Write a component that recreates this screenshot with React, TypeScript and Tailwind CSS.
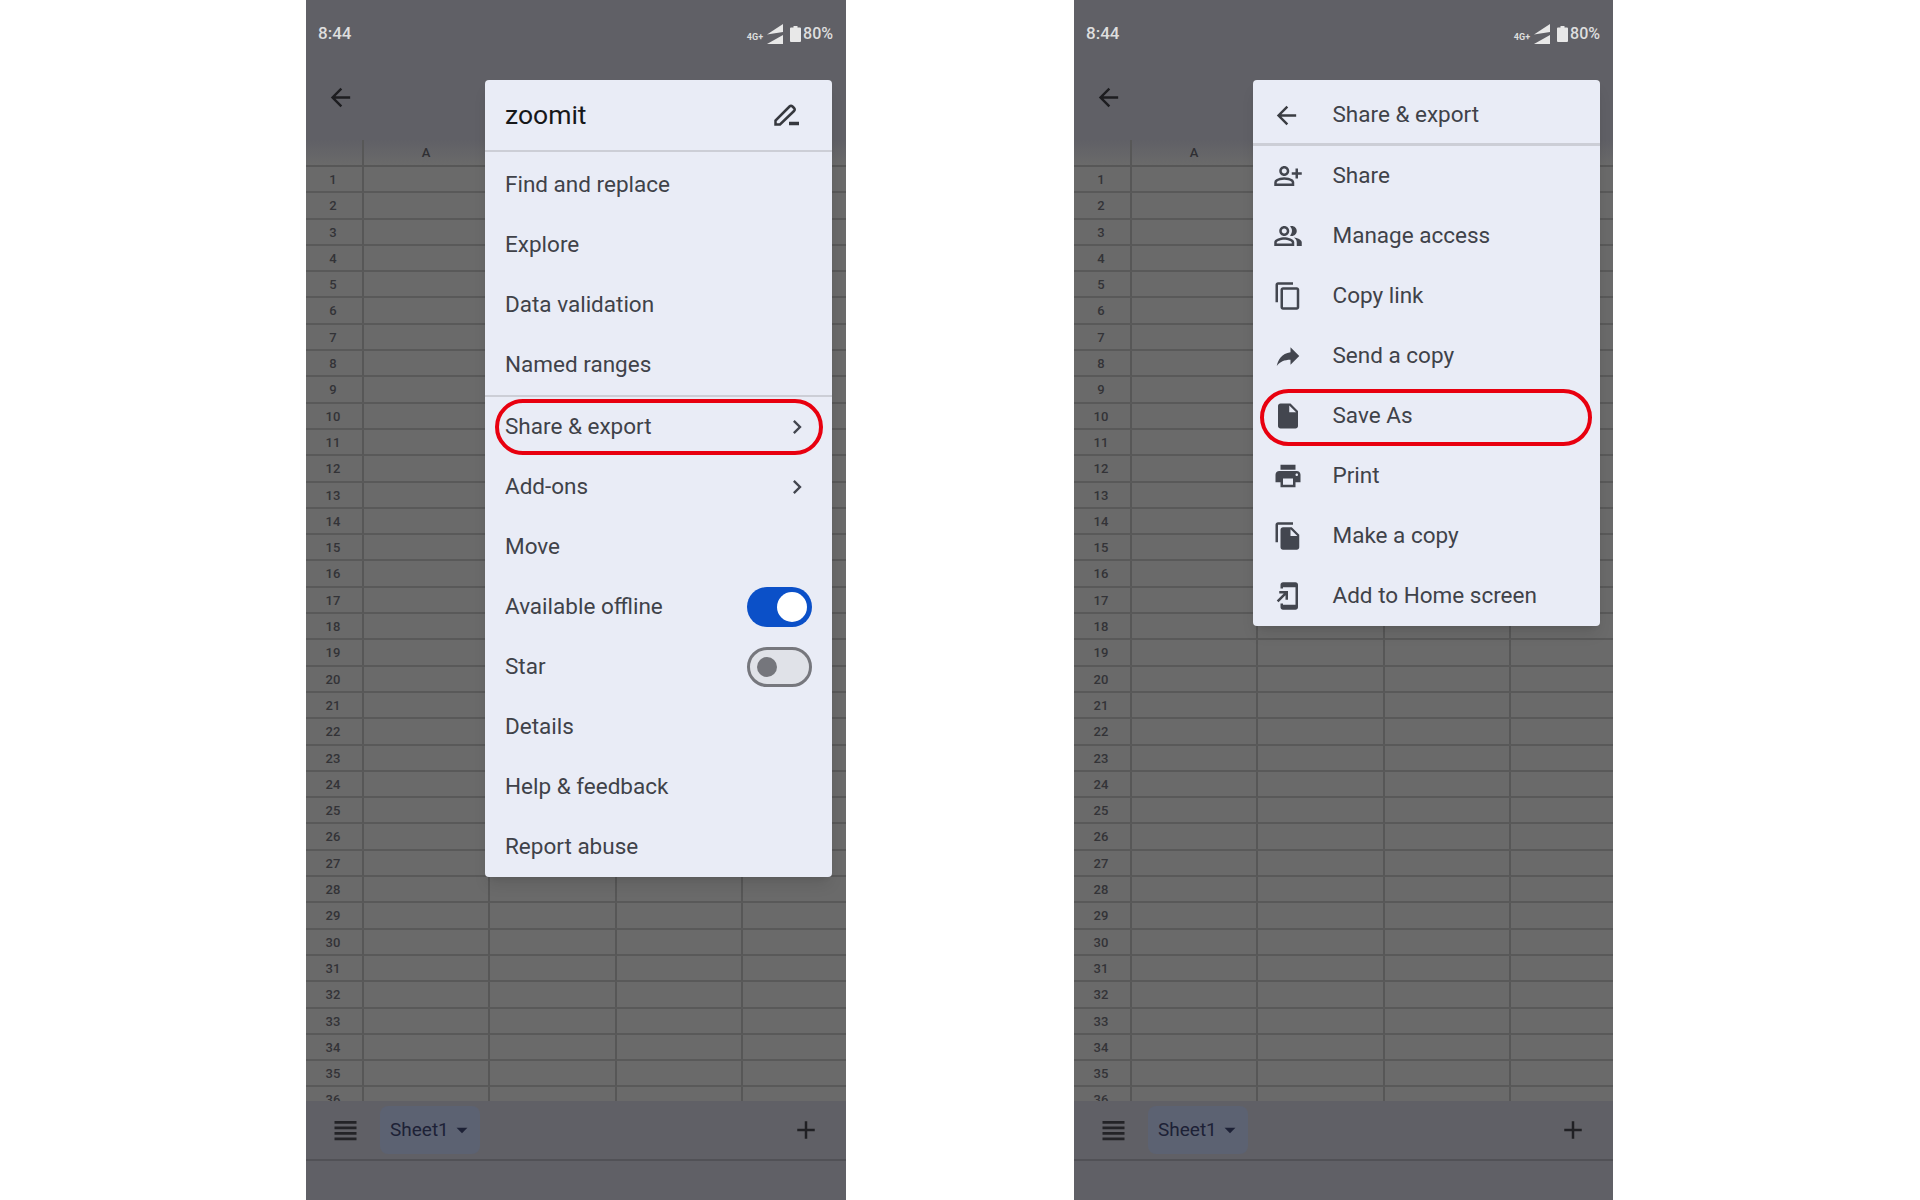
import type { ReactNode } from 'react';
import {
  MdAdd,
  MdAddToHomeScreen,
  MdArrowBack,
  MdArrowDropDown,
  MdChevronRight,
  MdFileCopy,
  MdInsertDriveFile,
  MdOutlineContentCopy,
  MdOutlinePeopleAlt,
  MdOutlinePersonAddAlt,
  MdPrint,
  MdReply,
  MdViewHeadline,
} from 'react-icons/md';

const rowNumbers = Array.from({ length: 36 }, (_, i) => i + 1);

function StatusBar() {
  return (
    <div className="flex h-[68px] items-center justify-between pl-3 pr-[13px] text-[#dedede]">
      <span className="text-[17px] font-medium">8:44</span>
      <div className="flex items-center">
        <span className="mt-2 mr-[3px] text-[9px] font-bold">4G+</span>
        <svg width="17" height="20" viewBox="0 0 17 20" className="fill-[#e8e8e8]">
          <path d="M17 0v8L1 10.5z" />
          <path d="M17 11v9H1z" />
        </svg>
        <svg width="11" height="16" viewBox="0 0 11 16" className="ml-[7px] mr-[2px] fill-[#e8e8e8]">
          <path d="M3.5 0h4v1.5H10a1 1 0 0 1 1 1V15a1 1 0 0 1-1 1H1a1 1 0 0 1-1-1V2.500a1 1 0 0 1 1-1h2.500z" />
        </svg>
        <span className="text-[16px] font-medium">80%</span>
      </div>
    </div>
  );
}

function Sheet() {
  return (
    <div className="flex-1 overflow-hidden bg-[#6a6a6a]">
      <div className="grid h-[27px] grid-cols-[58px_1fr] border-b-2 border-[#575757] bg-linear-to-b from-[#606066] to-[#6a6a6a]">
        <div className="border-r-2 border-[#575757]" />
        <div className="w-[124px] text-center text-[13px] font-medium leading-[25px] text-[#2f2f33]">A</div>
      </div>
      {rowNumbers.map((n) => (
        <div
          key={n}
          className="grid h-[26.3px] grid-cols-[58px_126px_126.5px_126.5px_1fr] border-b-2 border-[#595959]"
        >
          <div className="border-r-2 border-[#575757] pr-[2px] text-center text-[13px] font-medium leading-[25px] text-[#333337]">
            {n}
          </div>
          <div className="border-r-2 border-[#575757]" />
          <div className="border-r-2 border-[#575757]" />
          <div className="border-r-2 border-[#575757]" />
          <div />
        </div>
      ))}
    </div>
  );
}

function BottomBar() {
  return (
    <div className="flex h-[60px] items-center justify-between border-b-2 border-[#515156] bg-[#606066] pl-[23px] pr-[25px]">
      <div className="flex items-center">
        <MdViewHeadline className="text-[33px] text-[#232327]" />
        <div className="ml-[18px] flex h-[48px] w-[100px] items-center rounded-lg bg-[#5c6272] pl-[10px] text-[19px] text-[#1d2136]">
          Sheet1
          <MdArrowDropDown className="shrink-0 text-[26px]" />
        </div>
      </div>
      <MdAdd className="text-[30px] text-[#202024]" />
    </div>
  );
}

function Row({ label, icon, right }: { label: string; icon?: ReactNode; right?: ReactNode }) {
  return (
    <div className="flex h-[60px] items-center justify-between pl-5 pr-[20px]">
      <div className="flex items-center">
        {icon && <span className="flex w-[59.500px] text-[#43464f]">{icon}</span>}
        <span className="text-[22.5px] text-[#3f4249]">{label}</span>
      </div>
      {right}
    </div>
  );
}

function Toggle({ on }: { on?: boolean }) {
  if (on) {
    return (
      <div className="flex h-[40px] w-[65px] items-center justify-end rounded-full bg-[#0b50c8] pr-[5px]">
        <div className="h-[30px] w-[30px] rounded-full bg-white" />
      </div>
    );
  }
  return (
    <div className="flex h-[40px] w-[65px] items-center rounded-full border-[3px] border-[#76777d] bg-[#e0e2e8] pl-[7px]">
      <div className="h-[20px] w-[20px] rounded-full bg-[#75767c]" />
    </div>
  );
}

const chevron = <MdChevronRight className="mr-[1px] text-[28px] text-[#43464f]" />;

function PenIcon() {
  return (
    <svg width="25" height="22" viewBox="0 0 25 22" className="fill-none stroke-[#36383e]">
      <path strokeWidth="2.5" d="M1.500 20.500v-4L15.500 2.500q1.500-1.500 3 0l1.500 1.500q1.500 1.500 0 3L6 20.500z" />
      <path strokeWidth="3.500" d="M15 19.500h10" />
    </svg>
  );
}

function MainMenu() {
  return (
    <div className="absolute left-[179px] top-20 w-[347px] rounded bg-[#e9ecf6] shadow-lg">
      <div className="flex h-[72px] items-center justify-between border-b-2 border-[#ccced6] pl-5 pr-[33px]">
        <span className="text-[26.5px] text-[#17181a]">zoomit</span>
        <PenIcon />
      </div>
      <div className="border-b-2 border-[#ccced6] pt-[3px]">
        <Row label="Find and replace" />
        <Row label="Explore" />
        <Row label="Data validation" />
        <Row label="Named ranges" />
      </div>
      <Row label="Share & export" right={chevron} />
      <Row label="Add-ons" right={chevron} />
      <Row label="Move" />
      <Row label="Available offline" right={<Toggle on />} />
      <Row label="Star" right={<Toggle />} />
      <Row label="Details" />
      <Row label="Help & feedback" />
      <Row label="Report abuse" />
      {/* red annotation around the first submenu row */}
      <div className="absolute left-[10px] top-[319px] h-[56px] w-[328px] rounded-full border-[4px] border-[#e8000f]" />
    </div>
  );
}

function ExportMenu() {
  const iconClass = 'text-[30px]';
  return (
    <div className="absolute left-[179px] top-20 w-[347px] rounded bg-[#e9ecf6] shadow-lg">
      <div className="flex h-[66px] items-center border-b-[3px] border-[#ccced6] pt-[7px]">
        <div className="w-[79.500px] pl-[19px]">
          <MdArrowBack className="text-[29px] text-[#3a3c42]" />
        </div>
        <span className="text-[22.5px] text-[#3f4249]">Share &amp; export</span>
      </div>
      <Row label="Share" icon={<MdOutlinePersonAddAlt className={iconClass} />} />
      <Row label="Manage access" icon={<MdOutlinePeopleAlt className={iconClass} />} />
      <Row label="Copy link" icon={<MdOutlineContentCopy className={iconClass} />} />
      <Row label="Send a copy" icon={<MdReply className={`${iconClass} -scale-x-100`} />} />
      <Row label="Save As" icon={<MdInsertDriveFile className={iconClass} />} />
      <Row label="Print" icon={<MdPrint className={iconClass} />} />
      <Row label="Make a copy" icon={<MdFileCopy className={iconClass} />} />
      <Row label="Add to Home screen" icon={<MdAddToHomeScreen className={iconClass} />} />
      <div className="absolute left-[7px] top-[309px] h-[57px] w-[332px] rounded-full border-[4px] border-[#e8000f]" />
    </div>
  );
}

function Phone({ children, width }: { children: ReactNode; width: string }) {
  return (
    <div className={`relative flex h-[1200px] shrink-0 flex-col bg-[#606066] ${width}`}>
      <StatusBar />
      <div className="flex h-[72px] items-start pl-[20px] pt-[15px]">
        <MdArrowBack className="text-[29px] text-[#1d1d20]" />
      </div>
      <Sheet />
      <BottomBar />
      <div className="h-[39px]" />
      {children}
    </div>
  );
}

export default function App() {
  return (
    <div className="flex h-[1200px] w-[1920px] gap-[228px] overflow-hidden bg-white pl-[306px] font-['Roboto',sans-serif]">
      <Phone width="w-[540px]">
        <MainMenu />
      </Phone>
      <Phone width="w-[539px]">
        <ExportMenu />
      </Phone>
    </div>
  );
}
